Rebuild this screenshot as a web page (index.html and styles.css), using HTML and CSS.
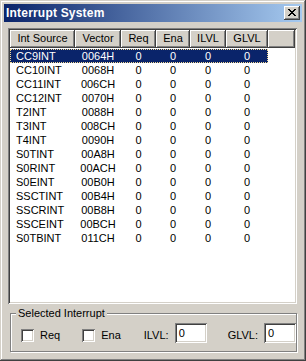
FILE: index.html
```html
<!DOCTYPE html>
<html>
<head>
<meta charset="utf-8">
<link rel="stylesheet" href="styles.css">
</head>
<body>
<div class="window">
  <div class="titlebar">
    <span class="title">Interrupt System</span>
    <span class="close">
      <svg width="8" height="7" viewBox="0 0 8 7" shape-rendering="crispEdges">
        <path d="M0 0h2v1H0zM6 0h2v1H6zM1 1h2v1H1zM5 1h2v1H5zM2 2h4v1H2zM3 3h2v1H3zM2 4h4v1H2zM1 5h2v1H1zM5 5h2v1H5zM0 6h2v1H0zM6 6h2v1H6z" fill="#000"/>
      </svg>
    </span>
  </div>
  <div class="list">
    <div class="header">
      <div class="hcell">Int Source</div>
      <div class="hcell">Vector</div>
      <div class="hcell">Req</div>
      <div class="hcell">Ena</div>
      <div class="hcell">ILVL</div>
      <div class="hcell">GLVL</div>
      <div class="hcell"></div>
    </div>
    <div class="rows">
      <div class="row selected"><span class="name">CC9INT</span><span>0064H</span><span>0</span><span>0</span><span>0</span><span>0</span></div>
      <div class="row"><span class="name">CC10INT</span><span>0068H</span><span>0</span><span>0</span><span>0</span><span>0</span></div>
      <div class="row"><span class="name">CC11INT</span><span>006CH</span><span>0</span><span>0</span><span>0</span><span>0</span></div>
      <div class="row"><span class="name">CC12INT</span><span>0070H</span><span>0</span><span>0</span><span>0</span><span>0</span></div>
      <div class="row"><span class="name">T2INT</span><span>0088H</span><span>0</span><span>0</span><span>0</span><span>0</span></div>
      <div class="row"><span class="name">T3INT</span><span>008CH</span><span>0</span><span>0</span><span>0</span><span>0</span></div>
      <div class="row"><span class="name">T4INT</span><span>0090H</span><span>0</span><span>0</span><span>0</span><span>0</span></div>
      <div class="row"><span class="name">S0TINT</span><span>00A8H</span><span>0</span><span>0</span><span>0</span><span>0</span></div>
      <div class="row"><span class="name">S0RINT</span><span>00ACH</span><span>0</span><span>0</span><span>0</span><span>0</span></div>
      <div class="row"><span class="name">S0EINT</span><span>00B0H</span><span>0</span><span>0</span><span>0</span><span>0</span></div>
      <div class="row"><span class="name">SSCTINT</span><span>00B4H</span><span>0</span><span>0</span><span>0</span><span>0</span></div>
      <div class="row"><span class="name">SSCRINT</span><span>00B8H</span><span>0</span><span>0</span><span>0</span><span>0</span></div>
      <div class="row"><span class="name">SSCEINT</span><span>00BCH</span><span>0</span><span>0</span><span>0</span><span>0</span></div>
      <div class="row"><span class="name">S0TBINT</span><span>011CH</span><span>0</span><span>0</span><span>0</span><span>0</span></div>
    </div>
  </div>
  <fieldset class="group">
    <legend class="legend">Selected Interrupt</legend>
    <div class="controls">
      <span class="cb"></span><span class="cblabel">Req</span>
      <span class="cb cb2"></span><span class="cblabel">Ena</span>
      <span class="flabel ilvl">ILVL:</span><span class="edit">0</span>
      <span class="flabel glvl">GLVL:</span><span class="edit">0</span>
    </div>
  </fieldset>
</div>
</body>
</html>
```
FILE: styles.css
```css
html, body {
  margin: 0;
  padding: 0;
  background: #d4d0c8;
}
body {
  font-family: "Liberation Sans", Arial, sans-serif;
  font-size: 11px;
  color: #000;
}
.window {
  width: 306px;
  height: 361px;
  box-sizing: border-box;
  padding: 4px;
  background: #d4d0c8;
  box-shadow: inset -1px -1px #404040, inset 1px 1px #d4d0c8, inset -2px -2px #808080, inset 2px 2px #fff;
  display: flex;
  flex-direction: column;
}
.titlebar {
  flex: none;
  height: 18px;
  background: linear-gradient(to right, #0a246a, #a6caf0);
  display: flex;
  align-items: center;
  justify-content: space-between;
  padding: 0 2px 0 2px;
}
.title {
  color: #fff;
  font-weight: bold;
  font-size: 12px;
  letter-spacing: 0.2px;
}
.close {
  width: 16px;
  height: 14px;
  box-sizing: border-box;
  background: #d4d0c8;
  box-shadow: inset -1px -1px #404040, inset 1px 1px #fff, inset -2px -2px #808080;
  display: flex;
  align-items: center;
  justify-content: center;
  padding: 0 1px 1px 0;
}
.close svg { display: block; }
.list {
  flex: none;
  margin: 6px 5px 0 4px;
  height: 276px;
  box-sizing: border-box;
  padding: 2px;
  background: #fff;
  box-shadow: inset 1px 1px #808080, inset -1px -1px #fff, inset 2px 2px #404040, inset -2px -2px #d4d0c8;
}
.header {
  display: grid;
  grid-template-columns: 65px 46px 35px 34px 36px 42px 1fr;
  height: 18px;
}
.hcell {
  background: #d4d0c8;
  box-shadow: inset -1px -1px #404040, inset 1px 1px #fff, inset -2px -2px #808080;
  text-align: center;
  line-height: 17px;
}
.rows {
  width: 258px;
  padding-top: 1px;
}
.row {
  display: grid;
  grid-template-columns: 65px 46px 35px 34px 36px 42px;
  height: 14px;
  line-height: 14px;
  box-sizing: border-box;
  text-align: center;
}
.row .name {
  text-align: left;
  padding-left: 6px;
}
.row.selected {
  background: #0a246a;
  color: #fff;
  outline: 1px dotted #f5db95;
  outline-offset: -1px;
}
.group {
  flex: none;
  margin: 3px 5px 0 6px;
  padding: 0;
  border: 1px solid #808080;
  box-shadow: inset 1px 1px #fff, 1px 1px #fff;
  min-width: 0;
}
.legend {
  margin-left: 5px;
  padding: 0 2px;
  line-height: 13px;
  background: #d4d0c8;
}
.controls {
  display: flex;
  align-items: center;
  height: 20px;
  padding: 3px 0 8px 10px;
}
.cb {
  width: 13px;
  height: 13px;
  box-sizing: border-box;
  background: #fff;
  box-shadow: inset 1px 1px #808080, inset -1px -1px #fff, inset 2px 2px #404040, inset -2px -2px #d4d0c8;
  margin-top: 5px;
}
.cb2 { margin-left: 22px; }
.cblabel {
  margin-left: 6px;
  margin-top: 4px;
}
.flabel { margin-top: 4px; }
.ilvl { margin-left: 23px; }
.glvl { margin-left: 21px; }
.edit {
  width: 32px;
  height: 20px;
  box-sizing: border-box;
  margin-left: 6px;
  padding-left: 4px;
  line-height: 20px;
  background: #fff;
  box-shadow: inset 1px 1px #808080, inset -1px -1px #fff, inset 2px 2px #404040, inset -2px -2px #d4d0c8;
}
```
